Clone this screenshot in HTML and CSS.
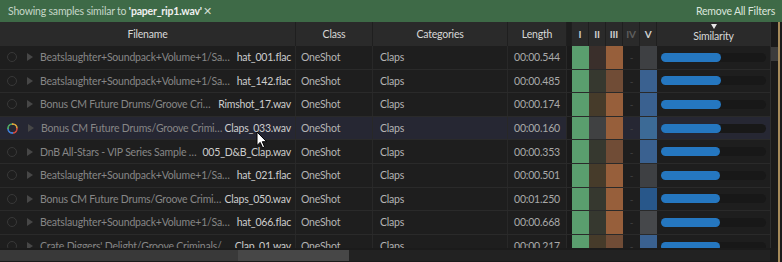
FILE: index.html
```html
<!DOCTYPE html>
<html lang="en">
<head>
    <meta charset="UTF-8">
    <title>Similar Samples</title>
    <link rel="stylesheet" href="styles.css">
</head>
<body>

<div class="banner">
    <span>Showing samples similar to <b>'paper_rip1.wav'</b><span class="close">&#x2715;</span></span>
    <span class="remove">Remove All Filters</span>
</div>

<div class="main">
    <div class="table">
        <div class="head grid">
            <div>Filename</div>
            <div>Class</div>
            <div>Categories</div>
            <div>Length</div>
            <div class="gap"></div>
            <div class="roman">I</div>
            <div class="roman">II</div>
            <div class="roman">III</div>
            <div class="roman dim">IV</div>
            <div class="roman">V</div>
            <div class="sorted">Similarity</div>
        </div>

        <div class="rows">
            <div class="row grid">
                <div class="cell file"><span class="ring"></span><span class="play"></span><span class="path">Beatslaughter+Soundpack+Volume+1/Samples/Hats/</span><span class="name">hat_001.flac</span></div>
                <div class="cell">OneShot</div>
                <div class="cell cat">Claps</div>
                <div class="cell len">00:00.544</div>
                <div class="gap"></div>
                <div class="tone t1"></div><div class="tone t2a"></div><div class="tone t3a"></div><div class="tone none">-</div><div class="tone t5a"></div>
                <div class="sim"><div class="track"><div class="fill" style="width: 60px"></div></div></div>
            </div>
            <div class="row grid">
                <div class="cell file"><span class="ring"></span><span class="play"></span><span class="path">Beatslaughter+Soundpack+Volume+1/Samples/Hats/</span><span class="name">hat_142.flac</span></div>
                <div class="cell">OneShot</div>
                <div class="cell cat">Claps</div>
                <div class="cell len">00:00.485</div>
                <div class="gap"></div>
                <div class="tone t1"></div><div class="tone t2b"></div><div class="tone t3b"></div><div class="tone none">-</div><div class="tone t5b"></div>
                <div class="sim"><div class="track"><div class="fill" style="width: 60px"></div></div></div>
            </div>
            <div class="row grid">
                <div class="cell file"><span class="ring"></span><span class="play"></span><span class="path">Bonus CM Future Drums/Groove Criminals/</span><span class="name">Rimshot_17.wav</span></div>
                <div class="cell">OneShot</div>
                <div class="cell cat">Claps</div>
                <div class="cell len">00:00.174</div>
                <div class="gap"></div>
                <div class="tone t1"></div><div class="tone t2c"></div><div class="tone t3a"></div><div class="tone none">-</div><div class="tone t5b"></div>
                <div class="sim"><div class="track"><div class="fill" style="width: 59.5px"></div></div></div>
            </div>
            <div class="row grid hover">
                <div class="cell file"><span class="ring busy"></span><span class="play"></span><span class="path">Bonus CM Future Drums/Groove Criminals/</span><span class="name">Claps_033.wav</span></div>
                <div class="cell">OneShot</div>
                <div class="cell cat">Claps</div>
                <div class="cell len">00:00.160</div>
                <div class="gap"></div>
                <div class="tone t1"></div><div class="tone t2d"></div><div class="tone t3a"></div><div class="tone none">-</div><div class="tone t5c"></div>
                <div class="sim"><div class="track"><div class="fill" style="width: 59.5px"></div></div></div>
            </div>
            <div class="row grid">
                <div class="cell file"><span class="ring"></span><span class="play"></span><span class="path">DnB All-Stars - VIP Series Sample Pack/</span><span class="name">005_D&amp;B_Clap.wav</span></div>
                <div class="cell">OneShot</div>
                <div class="cell cat">Claps</div>
                <div class="cell len">00:00.353</div>
                <div class="gap"></div>
                <div class="tone t1"></div><div class="tone t2b"></div><div class="tone t3b"></div><div class="tone none">-</div><div class="tone t5b"></div>
                <div class="sim"><div class="track"><div class="fill" style="width: 59px"></div></div></div>
            </div>
            <div class="row grid">
                <div class="cell file"><span class="ring"></span><span class="play"></span><span class="path">Beatslaughter+Soundpack+Volume+1/Samples/Hats/</span><span class="name">hat_021.flac</span></div>
                <div class="cell">OneShot</div>
                <div class="cell cat">Claps</div>
                <div class="cell len">00:00.501</div>
                <div class="gap"></div>
                <div class="tone t1"></div><div class="tone t2c"></div><div class="tone t3a"></div><div class="tone none">-</div><div class="tone t5a"></div>
                <div class="sim"><div class="track"><div class="fill" style="width: 59px"></div></div></div>
            </div>
            <div class="row grid">
                <div class="cell file"><span class="ring"></span><span class="play"></span><span class="path">Bonus CM Future Drums/Groove Criminals/</span><span class="name">Claps_050.wav</span></div>
                <div class="cell">OneShot</div>
                <div class="cell cat">Claps</div>
                <div class="cell len">00:01.250</div>
                <div class="gap"></div>
                <div class="tone t1"></div><div class="tone t2b"></div><div class="tone t3a"></div><div class="tone none">-</div><div class="tone t5d"></div>
                <div class="sim"><div class="track"><div class="fill" style="width: 59px"></div></div></div>
            </div>
            <div class="row grid">
                <div class="cell file"><span class="ring"></span><span class="play"></span><span class="path">Beatslaughter+Soundpack+Volume+1/Samples/Hats/</span><span class="name">hat_066.flac</span></div>
                <div class="cell">OneShot</div>
                <div class="cell cat">Claps</div>
                <div class="cell len">00:00.668</div>
                <div class="gap"></div>
                <div class="tone t1"></div><div class="tone t2b"></div><div class="tone t3a"></div><div class="tone none">-</div><div class="tone t5e"></div>
                <div class="sim"><div class="track"><div class="fill" style="width: 58.5px"></div></div></div>
            </div>
            <div class="row grid">
                <div class="cell file"><span class="ring"></span><span class="play"></span><span class="path">Crate Diggers' Delight/Groove Criminals/Drums/</span><span class="name">Clap_01.wav</span></div>
                <div class="cell">OneShot</div>
                <div class="cell cat">Claps</div>
                <div class="cell len">00:00.217</div>
                <div class="gap"></div>
                <div class="tone t1"></div><div class="tone t2c"></div><div class="tone t3b"></div><div class="tone none">-</div><div class="tone t5b"></div>
                <div class="sim"><div class="track"><div class="fill" style="width: 58.5px"></div></div></div>
            </div>
        </div>

        <div class="hscroll"><div class="hthumb"></div></div>
    </div>

    <div class="vscroll"><div class="vthumb"></div></div>
    <div class="edge"></div>
</div>

<svg class="cursor" width="12" height="18" viewBox="0 0 12 18">
    <path d="M1 1 L1 14.5 L4.2 11.4 L6.6 16.8 L8.6 15.9 L6.3 10.7 L10.6 10.7 Z" fill="#ffffff" stroke="#000000" stroke-width="1" stroke-linejoin="round"/>
</svg>

</body>
</html>
```

FILE: styles.css
```css
body {
    margin: 0;
    width: 782px;
    height: 262px;
    overflow: hidden;
    background-color: #1b1b1b;
    font-family: Lato, "Open Sans", sans-serif;
    font-size: 10.5px;
    letter-spacing: -0.2px;
    color: #b4b4b4;
}

.banner {
    height: 22px;
    padding: 0 7px 0 8px;
    display: flex;
    align-items: center;
    justify-content: space-between;
    background-color: #3e6a47;
    color: #c6d6c8;
}

.banner b {
    color: #f0f0f0;
}

.banner .close {
    margin-left: 1px;
    font-size: 11px;
    color: #d0dcd0;
}

.banner .remove {
    color: #dbe5dc;
}

.main {
    display: flex;
    height: 240px;
}

.table {
    width: 770px;
    display: flex;
    flex-direction: column;
}

.grid {
    display: grid;
    grid-template-columns: 296px 77px 135px 59px 5px 17px 17px 17px 17px 17px 113px;
}

/* header */

.head {
    height: 24px;
    background-color: #2a2a2a;
}

.head > div {
    display: flex;
    align-items: center;
    justify-content: center;
    border-right: 1px solid #1f1f1f;
    color: #d8d8d8;
    font-size: 10.5px;
}

.head .gap {
    background-color: #1d1d1d;
}

.head .roman {
    font-weight: bold;
    font-size: 10px;
    color: #cfcfcf;
}

.head .roman.dim {
    color: #5e5e5e;
}

.head .sorted {
    position: relative;
    border-right: none;
    padding-top: 3px;
}

.head .sorted::before {
    content: "";
    position: absolute;
    top: 2px;
    left: 54px;
    border-left: 3.5px solid transparent;
    border-right: 3.5px solid transparent;
    border-top: 5px solid #e6e6e6;
}

/* rows */

.rows {
    height: 202px;
    overflow: hidden;
}

.row {
    height: 23.6px;
    box-sizing: border-box;
    border-bottom: 1px solid #2a2a2a;
    background-color: #1e1e1e;
}

.row.hover {
    background-color: #262733;
}

.cell {
    display: flex;
    align-items: center;
    padding: 0 5px;
    border-right: 1px solid #282828;
    white-space: nowrap;
    overflow: hidden;
}

.cell.cat {
    padding-left: 7px;
}

.cell.len {
    padding-left: 6px;
    color: #a9a9a9;
}

.file {
    padding: 0 4px 0 7px;
}

.ring {
    flex: none;
    width: 8px;
    height: 8px;
    border: 1.5px solid #383838;
    border-radius: 50%;
}

.ring.busy {
    border: none;
    width: 11px;
    height: 11px;
    background: conic-gradient(#d9a13a 0 25%, #c9483e 25% 50%, #3d7bd0 50% 75%, #4ea564 75% 100%);
    -webkit-mask: radial-gradient(circle, transparent 3.5px, #000 4px);
    mask: radial-gradient(circle, transparent 3.5px, #000 4px);
}

.play {
    flex: none;
    margin: 0 7px 0 10px;
    border-top: 4px solid transparent;
    border-bottom: 4px solid transparent;
    border-left: 6px solid #474747;
}

.path {
    flex: 1;
    min-width: 0;
    overflow: hidden;
    text-overflow: ellipsis;
    color: #868686;
}

.name {
    flex: none;
    color: #cdcdcd;
}

.gap {
    background-color: #1a1a1a;
}

.tone {
    display: flex;
    align-items: center;
    justify-content: center;
}

.tone.none {
    color: #444444;
    font-size: 10px;
}

.t1 { background-color: #5a9e6e; }
.t2a { background-color: #3a2f2b; }
.t2b { background-color: #36382f; }
.t2c { background-color: #463b2a; }
.t2d { background-color: #404142; }
.t3a { background-color: #975f3b; }
.t3b { background-color: #704c36; }
.t5a { background-color: #3e4043; }
.t5b { background-color: #3a6190; }
.t5c { background-color: #3c6a96; }
.t5d { background-color: #28578a; }
.t5e { background-color: #46484b; }

.sim {
    display: flex;
    align-items: center;
    padding-left: 4px;
}

.track {
    width: 105px;
    height: 9px;
    border-radius: 5px;
    background-color: #181818;
}

.fill {
    height: 100%;
    border-radius: 5px;
    background-color: #2577c0;
}

/* scrollbars */

.hscroll {
    height: 11px;
    margin-top: 2px;
    background-color: #222222;
}

.hthumb {
    width: 349px;
    height: 100%;
    background: linear-gradient(to right, #393939 0 238px, #474747 238px);
}

.vscroll {
    width: 7px;
    padding-top: 25px;
    height: 201px;
    border-left: 1px solid #2e2e2e;
    background-color: #1a1a1a;
}

.vthumb {
    height: 14px;
    background-color: #3c3c3c;
}

.edge {
    width: 2px;
    border-left: 2px solid #a58a5a;
    background-color: #1b1b1b;
}

.cursor {
    position: absolute;
    left: 256px;
    top: 131px;
}
```
